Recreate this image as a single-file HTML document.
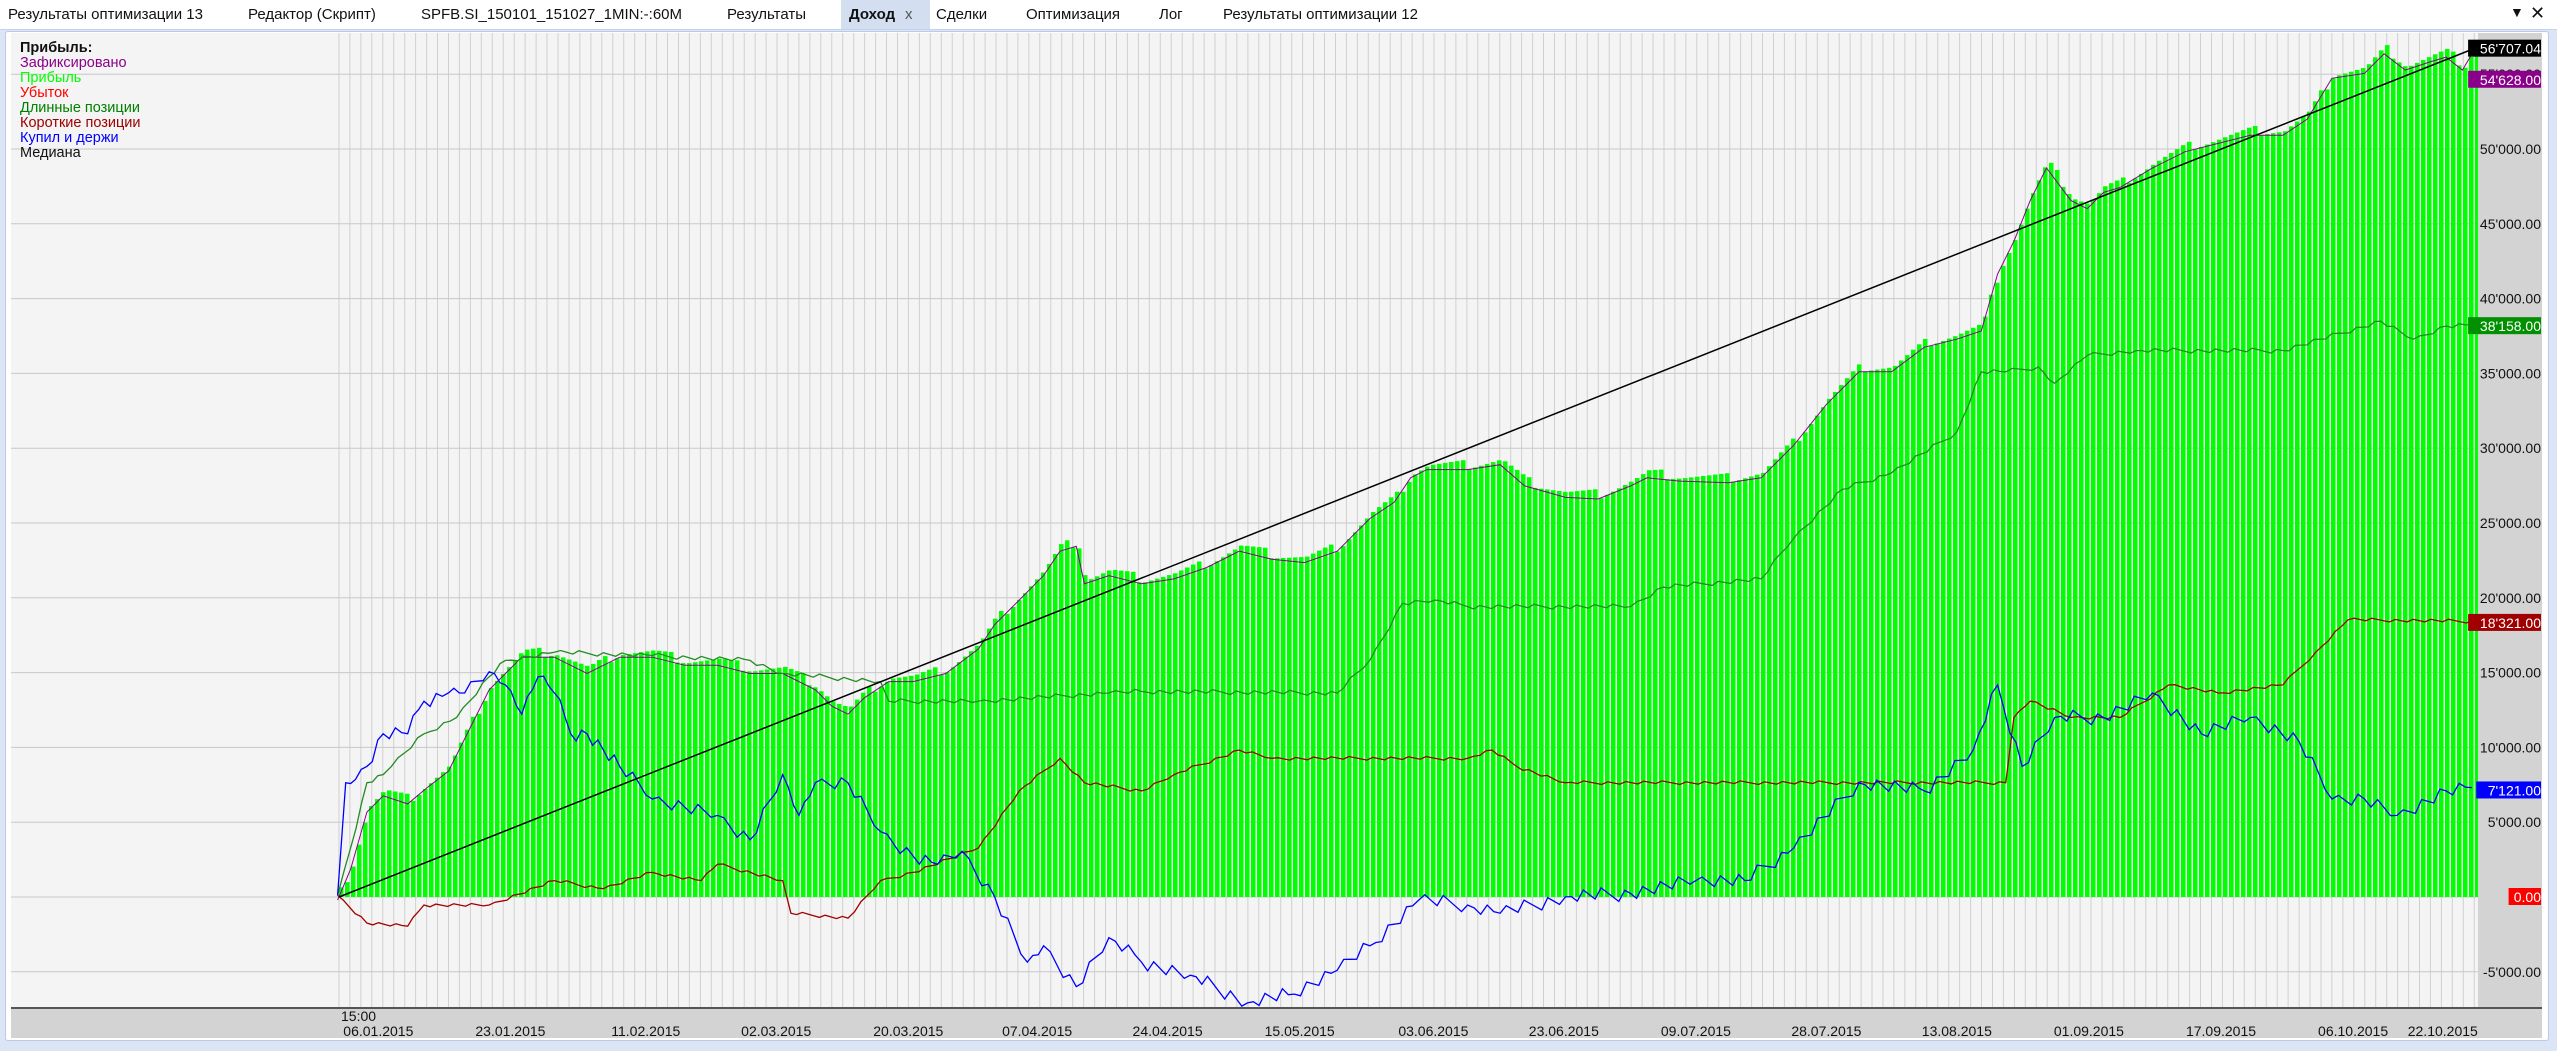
<!DOCTYPE html>
<html><head><meta charset="utf-8"><style>
html,body{margin:0;padding:0;width:2557px;height:1051px;overflow:hidden;background:#dbe5f5;font-family:"Liberation Sans","DejaVu Sans",sans-serif}
#tabs{position:absolute;left:0;top:0;width:2557px;height:29px;background:#fff;border-bottom:1px solid #c5d3ea}
.t{position:absolute;top:6px;font-size:15px;color:#111;white-space:nowrap}
#act{position:absolute;left:841px;top:0;width:89px;height:29px;background:#d3dff0}
#panel{position:absolute;left:5px;top:31px;width:2542px;height:1008px;background:#fff;border:1px solid #b9cbe8;border-radius:3px}
svg{position:absolute;left:0;top:0}
.leg{position:absolute;left:20px;font-size:14.5px;line-height:15px}
</style></head><body>
<div id="tabs">
<div id="act"></div>
<span class="t" style="left:8px">Результаты оптимизации 13</span>
<span class="t" style="left:248px">Редактор (Скрипт)</span>
<span class="t" style="left:421px">SPFB.SI_150101_151027_1MIN:-:60M</span>
<span class="t" style="left:727px">Результаты</span>
<span class="t" style="left:849px;font-weight:bold">Доход</span>
<span class="t" style="left:905px;color:#555">x</span>
<span class="t" style="left:936px">Сделки</span>
<span class="t" style="left:1026px">Оптимизация</span>
<span class="t" style="left:1159px">Лог</span>
<span class="t" style="left:1223px">Результаты оптимизации 12</span>
<span class="t" style="left:2510px;top:4px;font-size:14px">&#9660;</span>
<span class="t" style="left:2530px;top:3px;font-size:18px">✕</span>
</div>
<div id="panel"></div>
<svg id="s" width="2557" height="1051" xmlns="http://www.w3.org/2000/svg"></svg>
<div class="leg" style="top:41px;font-weight:bold;color:#111">Прибыль:</div>
<div class="leg" style="top:56px;color:#8b008b">Зафиксировано</div>
<div class="leg" style="top:71px;color:#00ff00">Прибыль</div>
<div class="leg" style="top:86px;color:#ff0000">Убыток</div>
<div class="leg" style="top:101px;color:#008000">Длинные позиции</div>
<div class="leg" style="top:116px;color:#a00000">Короткие позиции</div>
<div class="leg" style="top:131px;color:#0000ff">Купил и держи</div>
<div class="leg" style="top:146px;color:#111">Медиана</div>
<script>
var S=1.6307,svg=document.getElementById('s'),h='';
var L=11,R=2478,T=33,B=1008,Z=897,K=0.01496;
function Y(v){return Z-v*K}
h+='<rect x="'+L+'" y="'+T+'" width="'+(R-L)+'" height="'+(B-T)+'" fill="#f4f4f4"/>';
for(var x=339;x<R;x+=10.95)h+='<line x1="'+x.toFixed(1)+'" y1="'+T+'" x2="'+x.toFixed(1)+'" y2="'+B+'" stroke="#d0d0d0" stroke-width="1"/>';
for(var v=-5000;v<=55000;v+=5000)h+='<line x1="'+L+'" y1="'+Y(v)+'" x2="'+R+'" y2="'+Y(v)+'" stroke="#c8c8c8"/>';
function interp(p,x){for(var i=0;i<p.length-1;i++){if(x>=p[i][0]&&x<=p[i+1][0]){var t=(x-p[i][0])/(p[i+1][0]-p[i][0]);return p[i][1]+t*(p[i+1][1]-p[i][1]);}}return p[p.length-1][1];}
var env=[[207,549],[215,530],[225,495],[235,485],[250,490],[262,480],[275,470],[290,440],[300,420],[310,410],[320,400],[340,400],[360,410],[380,400],[400,400],[420,405],[440,405],[460,410],[480,410],[500,420],[510,430],[520,435],[530,425],[545,415],[560,415],[580,410],[600,395],[610,380],[625,365],[640,350],[650,335],[660,332],[665,355],[680,350],[700,355],[720,352],[740,345],[760,335],[780,340],[800,342],[820,335],[840,315],[855,305],[865,290],[875,285],[900,285],[920,282],[935,295],[960,302],[980,303],[1000,295],[1010,290],[1030,292],[1060,293],[1080,290],[1100,270],[1120,245],[1140,225],[1160,225],[1180,210],[1200,205],[1215,200],[1225,165],[1235,145],[1245,120],[1255,100],[1270,120],[1280,125],[1290,115],[1300,112],[1320,100],[1340,90],[1360,85],[1380,80],[1400,80],[1415,70],[1430,45],[1450,42],[1462,30],[1475,40],[1490,35],[1500,32],[1510,40],[1516,30]];
var bx=339,i=0;
while(bx<R-1){var dx=bx/S;var ty=interp(env,dx)*S+((i*7919)%11-5)*0.9;if(ty>Z)ty=Z;var w=Math.min(4.5,R-bx);
h+='<rect x="'+bx.toFixed(1)+'" y="'+ty.toFixed(1)+'" width="'+w.toFixed(1)+'" height="'+(Z-ty).toFixed(1)+'" fill="#00ff00"/>';bx+=6;i++;}
function pl(p,c,w,jit){var s='',n=0;
for(var k=0;k<p.length;k++){var x0=p[k][0]*S,y0=p[k][1]*S;
 if(jit&&k<p.length-1){var x1=p[k+1][0]*S,y1=p[k+1][1]*S,st=Math.max(1,Math.round((x1-x0)/6));
  for(var j=0;j<st;j++){var t=j/st;var jj=j==0?0:(((n*7193)%13)-6)*jit;n++;s+=(x0+(x1-x0)*t).toFixed(1)+','+(y0+(y1-y0)*t+jj).toFixed(1)+' ';}}
 else s+=x0.toFixed(1)+','+y0.toFixed(1)+' ';}
h+='<polyline points="'+s+'" fill="none" stroke="'+c+'" stroke-width="'+(w||1.3)+'"/>';}
pl(env.map(function(q){return [q[0],q[1]+3]}),'#8b008b',1);
pl([[207,549],[215,520],[225,480],[235,475],[240,470],[260,450],[280,440],[300,415],[310,405],[340,400],[400,402],[460,405],[480,413],[540,418],[545,430],[600,430],[680,425],[700,424],[820,425],[840,405],[860,370],[880,368],[900,372],[1000,372],[1020,360],[1080,355],[1100,330],[1130,300],[1160,290],[1200,265],[1215,228],[1230,228],[1250,225],[1260,235],[1280,218],[1310,215],[1400,215],[1460,197],[1480,208],[1500,200],[1516,199]],'#228b22',1.3,0.4);
pl([[207,549],[225,566],[250,568],[260,555],[300,555],[340,540],[370,545],[400,535],[430,540],[440,530],[480,540],[485,560],[520,563],[540,540],[560,535],[600,520],[625,485],[650,465],[665,480],[700,485],[720,475],[760,460],[780,465],[900,465],[915,460],[930,470],[960,480],[1230,480],[1235,440],[1245,430],[1270,440],[1300,440],[1330,420],[1360,425],[1400,420],[1420,400],[1440,380],[1516,381]],'#a00000',1.3,0.3);
pl([[207,549],[212,480],[218,478],[225,470],[235,450],[250,450],[260,430],[275,425],[285,425],[300,412],[310,420],[320,438],[330,415],[340,425],[350,450],[360,450],[370,460],[380,470],[400,490],[420,495],[440,500],[460,515],[480,475],[490,500],[500,480],[520,480],[540,510],[560,525],[575,530],[590,522],[610,550],[630,590],[640,580],[660,605],[680,575],[700,590],[730,598],[765,615],[790,610],[820,595],[840,580],[870,552],[900,555],[920,560],[960,550],[1000,548],[1040,540],[1070,540],[1100,520],[1140,480],[1180,485],[1210,460],[1225,420],[1240,470],[1260,440],[1290,440],[1320,425],[1350,450],[1380,440],[1410,455],[1430,490],[1450,490],[1470,500],[1500,485],[1516,483]],'#0000ff',1.3,1.2);
h+='<line x1="339" y1="'+Z+'" x2="'+R+'" y2="47" stroke="#000" stroke-width="1.5"/>';
h+='<rect x="'+R+'" y="'+T+'" width="64" height="'+(B-T)+'" fill="#d3d3d3"/>';
h+='<rect x="'+L+'" y="'+B+'" width="'+(R-L+64)+'" height="30" fill="#d3d3d3"/><line x1="'+L+'" y1="'+B+'" x2="2542" y2="'+B+'" stroke="#555" stroke-width="2"/>';
for(var v=-5000;v<=55000;v+=5000){if(v==0)continue;var s=(v<0?'-':'')+Math.abs(v/1000)+"'000.00";h+='<text x="2541" y="'+(Y(v)+5)+'" font-size="14" text-anchor="end" fill="#111">'+s+'</text>';}
function lab(v,txt,bg,fg){var y=Y(v);h+='<rect x="'+(2541-txt.length*8.1)+'" y="'+(y-9)+'" width="'+(txt.length*8.1)+'" height="17" fill="'+bg+'"/><text x="2541" y="'+(y+5)+'" font-size="14" text-anchor="end" fill="'+fg+'">'+txt+'</text>';}
lab(56707,"56'707.04","#000","#fff");lab(54628,"54'628.00","#8b008b","#fff");lab(38158,"38'158.00","#009000","#fff");lab(18321,"18'321.00","#a00000","#fff");lab(7121,"7'121.00","#0000ff","#fff");lab(0,"0.00","#ff0000","#fff");
var d=['06.01.2015','23.01.2015','11.02.2015','02.03.2015','20.03.2015','07.04.2015','24.04.2015','15.05.2015','03.06.2015','23.06.2015','09.07.2015','28.07.2015','13.08.2015','01.09.2015','17.09.2015','06.10.2015','22.10.2015'];
var dx=[232,313,396,476,557,636,716,797,879,959,1040,1120,1200,1281,1362,1443,1498];
d.forEach(function(t,k){h+='<text x="'+(dx[k]*S)+'" y="1036" font-size="14" text-anchor="middle" fill="#111">'+t+'</text>'});
h+='<text x="341" y="1021" font-size="14" fill="#111">15:00</text>';
svg.innerHTML=h;
</script>
</body></html>
